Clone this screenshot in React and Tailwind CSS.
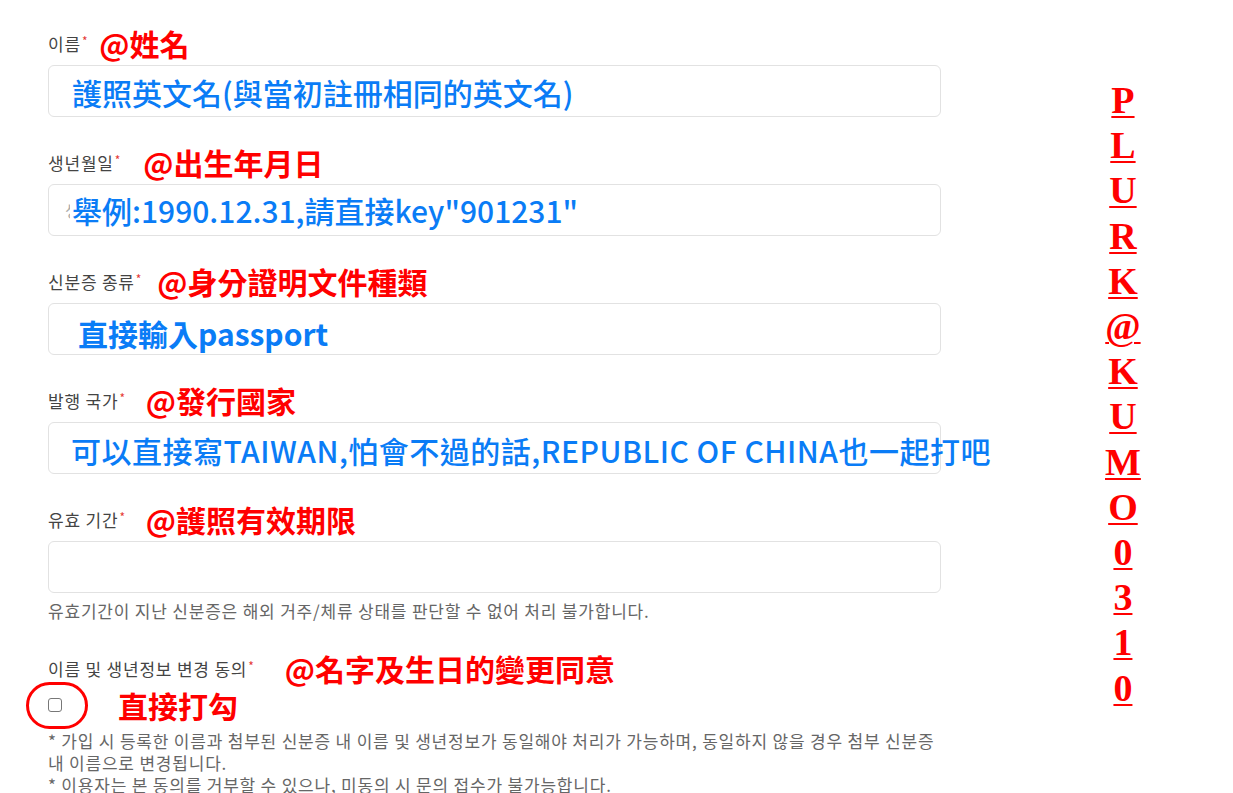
import React from "react";

const kr = { fontFamily: '"Noto Sans CJK KR", "Noto Sans", sans-serif' };
const tc = { fontFamily: '"Noto Sans CJK TC", "Noto Sans", sans-serif' };

const Label = ({ text, note, gap }) => (
  <div className="flex items-center h-7 mb-2">
    <span className="text-[17px] tracking-[0.8px] text-[#444] leading-none" style={kr}>
      {text}
      <span className="text-[#e53935] text-[12px] align-top ml-[1px]">*</span>
    </span>
    <span
      className={`text-[30px] font-bold text-[#ff0000] leading-none whitespace-nowrap ${gap}`}
      style={tc}
    >
      {note}
    </span>
  </div>
);

const Box = ({ children }) => (
  <div className="relative flex items-center h-[52px] border border-[#e2e2e2] rounded-[6px] bg-white">
    {children}
  </div>
);

const Blue = ({ children, cls }) => (
  <span
    className={`text-[30px] font-medium text-[#0a7cf6] leading-none whitespace-nowrap ${cls}`}
    style={tc}
  >
    {children}
  </span>
);

const plurk = "PLURK@KUMO0310".split("");

export default function App() {
  return (
    <div className="bg-white w-[1233px] h-[793px] overflow-hidden flex">
      <div className="w-[893px] ml-[48px] pt-[29px] shrink-0">
        <Label text="이름" note="@姓名" gap="ml-[11px]" />
        <Box>
          <Blue cls="ml-[23px] mt-[1px]">護照英文名(與當初註冊相同的英文名)</Blue>
        </Box>

        <div className="mt-[31px]">
          <Label text="생년월일" note="@出生年月日" gap="ml-[22px]" />
          <Box>
            <span className="w-[5px] ml-[16px] overflow-hidden text-[16px] text-[#aaa]" style={kr}>
              생
            </span>
            <Blue cls="ml-[2px]">舉例:1990.12.31,請直接key"901231"</Blue>
          </Box>
        </div>

        <div className="mt-[31px]">
          <Label text="신분증 종류" note="@身分證明文件種類" gap="ml-[15px]" />
          <Box>
            <Blue cls="ml-[29px] mt-[8px] font-semibold">直接輸入passport</Blue>
          </Box>
        </div>

        <div className="mt-[31px]">
          <Label text="발행 국가" note="@發行國家" gap="ml-[20px]" />
          <Box>
            <span className="w-[2px] h-[12px] ml-[17px] bg-[#c9a27e]" />
            <Blue cls="ml-[5px] mt-[4px] tracking-[0.5px]">
              可以直接寫TAIWAN,怕會不過的話,REPUBLIC OF CHINA也一起打吧
            </Blue>
          </Box>
        </div>

        <div className="mt-[31px]">
          <Label text="유효 기간" note="@護照有效期限" gap="ml-[20px]" />
          <Box />
          <p className="mt-[7px] text-[17px] tracking-[0.8px] text-[#666] leading-[22px]" style={kr}>
            유효기간이 지난 신분증은 해외 거주/체류 상태를 판단할 수 없어 처리 불가합니다.
          </p>
        </div>

        <div className="mt-[32px]">
          <Label text="이름 및 생년정보 변경 동의" note="@名字及生日的變更同意" gap="ml-[30px]" />
          <div className="relative flex items-center h-[30px]">
            <span className="w-[14px] h-[14px] border border-[#777] rounded-[3px]" />
            <span className="absolute left-[-22px] top-[-8px] w-[62px] h-[47px] border-[3px] border-[#ff0000] rounded-full" />
            <span className="ml-[56px] text-[30px] font-bold text-[#ff0000] leading-none" style={tc}>
              直接打勾
            </span>
          </div>
          <div className="mt-[10px] text-[17px] tracking-[0.8px] text-[#666] leading-[22px] whitespace-nowrap" style={kr}>
            <p>
              * 가입 시 등록한 이름과 첨부된 신분증 내 이름 및 생년정보가 동일해야 처리가 가능하며, 동일하지 않을 경우 첨부 신분증
            </p>
            <p>내 이름으로 변경됩니다.</p>
            <p>* 이용자는 본 동의를 거부할 수 있으나, 미동의 시 문의 접수가 불가능합니다.</p>
          </div>
        </div>
      </div>

      <div
        className="ml-[164px] pt-[78px] flex flex-col items-center text-[38px] font-bold text-[#ff0000] leading-[45.2px]"
        style={{ fontFamily: '"Liberation Serif", serif' }}
      >
        {plurk.map((c, i) => (
          <span key={i} className="underline decoration-2 underline-offset-[3px]">
            {c}
          </span>
        ))}
      </div>
    </div>
  );
}
